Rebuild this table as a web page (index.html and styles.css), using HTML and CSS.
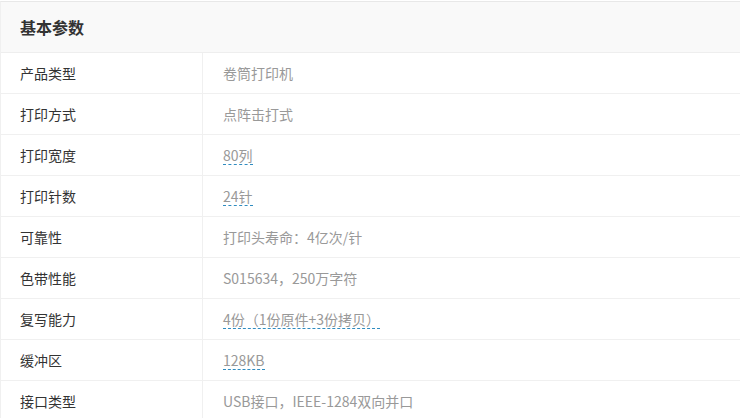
FILE: index.html
```html
<!DOCTYPE html>
<html lang="zh-CN">
<head>
    <meta charset="UTF-8">
    <meta name="viewport" content="width=device-width, initial-scale=1.0">
    <title>基本参数</title>
    <link rel="stylesheet" href="styles.css">
</head>
<body>
    <div class="params">
        <h3 class="params-title">基本参数</h3>
        <table class="params-table">
            <tr>
                <th>产品类型</th>
                <td>卷筒打印机</td>
            </tr>
            <tr>
                <th>打印方式</th>
                <td>点阵击打式</td>
            </tr>
            <tr>
                <th>打印宽度</th>
                <td><span class="link">80列</span></td>
            </tr>
            <tr>
                <th>打印针数</th>
                <td><span class="link">24针</span></td>
            </tr>
            <tr>
                <th>可靠性</th>
                <td>打印头寿命：4亿次/针</td>
            </tr>
            <tr>
                <th>色带性能</th>
                <td>S015634，250万字符</td>
            </tr>
            <tr>
                <th>复写能力</th>
                <td><span class="link">4份（1份原件+3份拷贝）</span></td>
            </tr>
            <tr>
                <th>缓冲区</th>
                <td><span class="link">128KB</span></td>
            </tr>
            <tr>
                <th>接口类型</th>
                <td>USB接口，IEEE-1284双向并口</td>
            </tr>
        </table>
    </div>
</body>
</html>
```

FILE: styles.css
```css
body {
    margin: 0;
    font-family: "Noto Sans CJK SC", "Liberation Sans", sans-serif;
    background-color: #fff;
}
.params {
    margin-top: 1px;
    width: 760px;
    border-top: 1px solid #e8e8e8;
    border-left: 1px solid #f0f0f0;
}
.params-title {
    margin: 0;
    height: 50px;
    line-height: 50px;
    padding-left: 19px;
    font-size: 16px;
    font-weight: bold;
    color: #333;
    background-color: #f9f9f9;
    border-bottom: 1px solid #eee;
}
.params-table {
    width: 100%;
    border-collapse: collapse;
}
.params-table th,
.params-table td {
    height: 20px;
    padding-top: 10px;
    padding-bottom: 10px;
    font-size: 14px;
    line-height: 20px;
    font-weight: normal;
    text-align: left;
    vertical-align: top;
    border-bottom: 1px solid #f0f0f0;
}
.params-table th {
    width: 182px;
    padding-left: 19px;
    padding-right: 0;
    color: #333;
    border-right: 1px solid #f0f0f0;
}
.params-table td {
    padding-left: 20px;
    padding-right: 0;
    color: #999;
}
.link {
    display: inline-block;
    vertical-align: top;
    height: 18px;
    line-height: 18px;
    padding-top: 1px;
    border-bottom: 1px dashed #2f8cc0;
}
```
